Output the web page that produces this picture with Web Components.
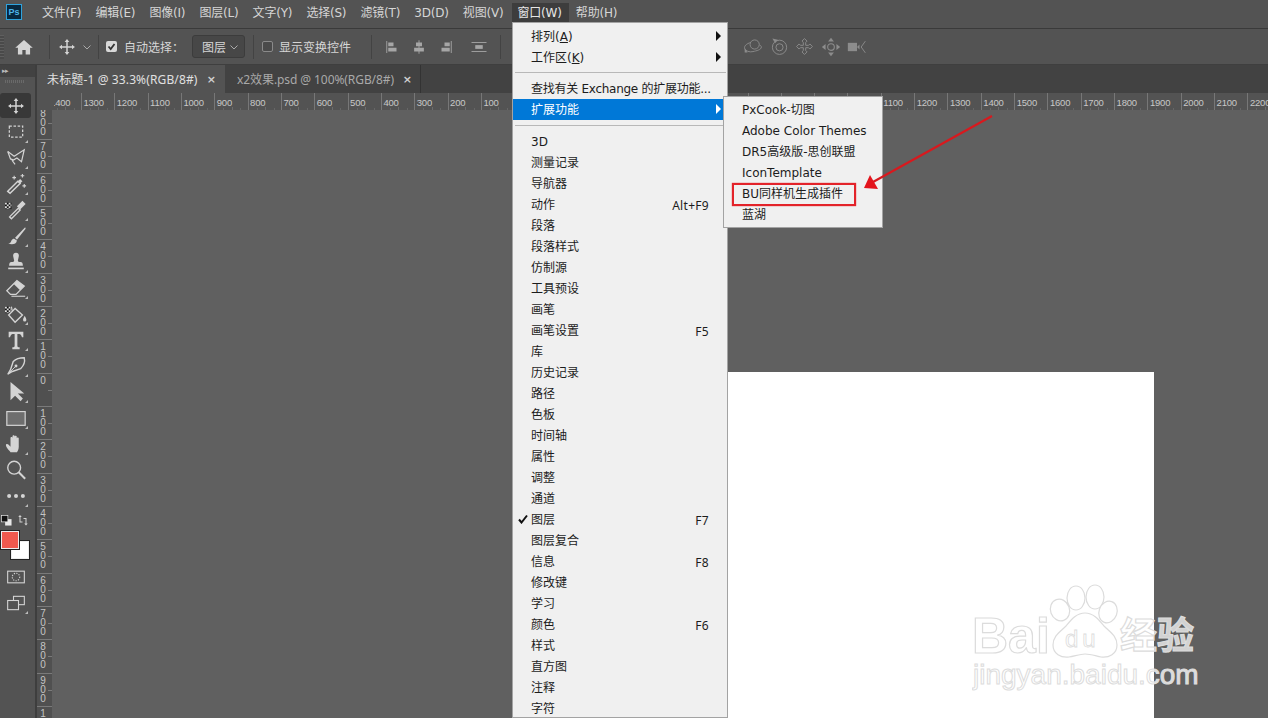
<!DOCTYPE html>
<html><head><meta charset="utf-8">
<style>
html,body{margin:0;padding:0;background:#606060;overflow:hidden}
body{font:12px "DejaVu Sans","Noto Sans CJK SC",sans-serif}
</style></head><body>
<ps-app></ps-app>
<script>
const CHECK='<g transform="translate(0 4)"><rect x="0" y="0" width="7" height="7" fill="#111"/><path d="M0 0h2v2H0zM4 0h2v2H4zM2 2h2v2H2zM6 2h1v2H6zM0 4h2v2H0zM4 4h2v2H4zM2 6h2v1H2z" fill="#ddd"/></g>';
const ICONS={
 home:'<path d="M12 3.500 1.500 13h3.200v8h5.300v-5.500h4V21h5.300v-8h3.200z" fill="currentColor"/>',
 move:'<path d="M12 2.500 9.200 6h1.900v5.100H6V9.200L2.500 12 6 14.800v-1.900h5.100V18H9.200l2.800 3.500 2.800-3.500h-1.900v-5.100H18v1.900l3.500-2.800L18 9.200v1.900h-5.100V6h1.900z" fill="currentColor"/>',
 marquee:'<rect x="4" y="5" width="16" height="13" fill="none" stroke="currentColor" stroke-width="1.500" stroke-dasharray="3 2"/>',
 lasso:'<path d="M3 5 10 10 21 3l-3 13-5-4-5 3 3 4" fill="none" stroke="currentColor" stroke-width="1.300"/><path d="M3 5l3 8 3 1" fill="none" stroke="currentColor" stroke-width="1.300"/>',
 wand:'<path d="M3 20 14 9l2.500 2.500L5.500 22z" fill="none" stroke="currentColor" stroke-width="1.600"/><path d="M14 9l2.500-2.500 2.500 2.500-2.500 2.500z" fill="currentColor"/><path d="M10 3v4M8 5h4M19 1v4M17 3h4M21 12v4M19 14h4" stroke="currentColor" stroke-width="1.200"/>',
 dropper:CHECK+'<path d="M7 21.500 5 19.500 14.500 10l2 2z" fill="none" stroke="currentColor" stroke-width="1.500"/><path d="M13 8l6-6 3.500 3.500-6 6z" fill="currentColor"/>',
 brush:'<path d="M22 2.500 11 14l2 2L22.500 4z" fill="currentColor"/><path d="M10 15c-3 0-3 3-4 4-.6.700-1.500 1-2.500 1 3 2 9 1.500 9.500-3z" fill="currentColor"/>',
 stamp:'<path d="M12 2c-2.500 0-3.500 2-3 4l1 4.500c0 1-1 1.500-3 1.500-1.500 0-2.500 1-2.500 4h15c0-3-1-4-2.500-4-2 0-3-.5-3-1.500l1-4.500c.5-2-.5-4-3-4z" fill="currentColor"/><path d="M3.500 19h17" stroke="currentColor" stroke-width="1.800"/>',
 eraser:'<path d="M2 15 13 4l8 6-9 9H6z" fill="none" stroke="currentColor" stroke-width="1.400"/><path d="M9.500 7.500 13 4l8 6-4.500 4.500z" fill="currentColor"/><path d="M7 21h15" stroke="currentColor" stroke-width="1.200"/>',
 bucket:CHECK+'<path d="M11 6 4 13l7 8 8-8z" fill="none" stroke="currentColor" stroke-width="1.500"/><path d="M8 9 7 4" stroke="currentColor" stroke-width="1.200"/><path d="M21.500 14c1 2 1.800 3 1.800 4.500a1.800 1.800 0 0 1-3.600 0c0-1.500.8-2.500 1.800-4.500z" fill="currentColor"/>',
 type:'<path d="M4 3h16v6h-1.500c-.5-2-1.500-3.500-3-3.500H13.500v13c0 1 .7 1.300 2.500 1.300V22H8v-2.200c1.800 0 2.500-.3 2.500-1.300v-13H8.500c-1.500 0-2.500 1.500-3 3.500H4z" fill="currentColor"/>',
 pen:'<path d="M21 3c-4 0-9 1-12 4L6 16l-3 5 5-3 9-3c3-3 5-8 4-12z" fill="none" stroke="currentColor" stroke-width="1.500"/><circle cx="12" cy="12" r="1.600" fill="currentColor"/><path d="M5 19l6-6" stroke="currentColor"/>',
 arrow:'<path d="M6 1v20l5-5 6 6 2.500-3-5.500-5.500H21z" fill="currentColor"/>',
 rect:'<rect x="2" y="5" width="20" height="15" fill="#6e6e6e" stroke="currentColor" stroke-width="1.300"/>',
 hand:'<path d="M6 21c-1-2-5-5-5-8 0-1.200 1.800-1.500 3-.2L6 15V5.500c0-1.500 2.200-1.500 2.200 0V11V3.500c0-1.500 2.300-1.500 2.300 0V11V4c0-1.500 2.300-1.500 2.300 0v7.500V6c0-1.500 2.200-1.500 2.200 0v9c0 3-1 4.500-2 6z" fill="currentColor"/>',
 zoom:'<circle cx="10" cy="9.500" r="7" fill="none" stroke="currentColor" stroke-width="1.500"/><path d="M15 14.500 22 21.500" stroke="currentColor" stroke-width="2.200"/>',
 dots:'<circle cx="4.500" cy="12" r="2.200" fill="currentColor"/><circle cx="12" cy="12" r="2.200" fill="currentColor"/><circle cx="19.500" cy="12" r="2.200" fill="currentColor"/>',
 mask:'<rect x="2" y="5" width="20" height="14" fill="none" stroke="currentColor" stroke-width="1.300"/><circle cx="12" cy="12" r="4.500" fill="none" stroke="currentColor" stroke-width="1.300" stroke-dasharray="1.500 1.500"/>',
 screen:'<rect x="9" y="4" width="13" height="10" fill="none" stroke="currentColor" stroke-width="1.300"/><rect x="2" y="9" width="13" height="11" fill="#535353" stroke="currentColor" stroke-width="1.300"/>',
 alignL:'<path d="M5 4v16" stroke="currentColor" stroke-width="1.200"/><path d="M7 6h7v5H7zM7 13h11v5H7z" fill="currentColor"/>',
 alignC:'<path d="M12 3v18" stroke="currentColor" stroke-width="1.200"/><path d="M8 6h8v5H8zM5.500 13h13v5h-13z" fill="currentColor"/>',
 alignR:'<path d="M19 4v16" stroke="currentColor" stroke-width="1.200"/><path d="M10 6h7v5h-7zM6 13h11v5H6z" fill="currentColor"/>',
 alignT:'<path d="M2 6h20M2 18h20" stroke="currentColor" stroke-width="1.200"/><path d="M7 9.500h10v5H7z" fill="currentColor"/>',
 orbit:'<circle cx="14" cy="9" r="5.500" fill="none" stroke="currentColor" stroke-width="1.100"/><path d="M9.500 6.500C4 8 1 11 2 14s6 4.500 10 3.500 10-2 10-5.500c0-1-1-2-2-2.500" fill="none" stroke="currentColor" stroke-width="1.100"/><path d="M2 13l3.500 5.500h-3.500z" fill="currentColor"/>',
 roll:'<circle cx="12" cy="13" r="9" fill="none" stroke="currentColor" stroke-width="1.200"/><circle cx="12" cy="13" r="4.500" fill="none" stroke="currentColor" stroke-width="1.200"/><path d="M3 2l7 1.500-3.500 4.500z" fill="currentColor"/>',
 drag:'<path d="M12 2l3.200 3.200-1.700 1.700v3.600h3.600l1.700-1.700L22 12l-3.200 3.200-1.700-1.700h-3.600v3.600l1.700 1.700L12 22l-3.200-3.200 1.700-1.700v-3.600H6.900l-1.700 1.700L2 12l3.200-3.200 1.700 1.700h3.600V6.900L8.800 5.200z" fill="none" stroke="currentColor" stroke-width="1.200"/>',
 slide:'<circle cx="12" cy="12" r="4" fill="none" stroke="currentColor" stroke-width="1.300"/><path d="M12 1l3.500 4.500h-7zM12 23l3.500-4.500h-7zM1 12l4.500-3.500v7zM23 12l-4.500-3.500v7z" fill="currentColor"/>',
 video:'<path d="M1 7h11v10H1z" fill="currentColor"/><path d="M12 12l3-3v6z" fill="currentColor"/><path d="M22 5l-5 7 5 7" fill="none" stroke="currentColor" stroke-width="1.100"/>',
 swap:'<path d="M5 17V6H2.500L6 2l3.500 4H7v9h4v2zM19 8v11h2.500L18 23l-3.500-4H17v-9h-4V8z" fill="currentColor"/>',
 defaults:'<rect x="9" y="9" width="14" height="14" fill="#e8e8e8"/><rect x="1" y="1" width="14" height="14" fill="#111" stroke="#e8e8e8" stroke-width="1.500"/>'
};
const def=(name,html,init)=>{
 customElements.define(name,class extends HTMLElement{
  constructor(){super();this.attachShadow({mode:'open'}).innerHTML=html;}
  connectedCallback(){ if(init) init(this,this.shadowRoot); }
 });
};

def('ps-icon',`<style>:host{display:inline-flex;align-items:center;justify-content:center;color:#d4d4d4;flex:none}svg{display:block;width:100%;height:100%}</style><svg viewBox="0 0 24 24"></svg>`,(h,s)=>{
 s.querySelector('svg').innerHTML=ICONS[h.getAttribute('name')]||'';
 const z=h.getAttribute('size')||20; h.style.width=z+'px'; h.style.height=z+'px';
});

def('ps-menubar',`<style>
:host{display:flex;align-items:center;height:28px;background:#535353;border-bottom:1px solid #3a3a3a;padding-left:6px;color:#d6d6d6;font-size:12px}
.logo{width:14px;height:14px;border:1px solid #2fa3dd;background:#07283f;color:#4db5ea;font:bold 9px "Liberation Sans",sans-serif;display:flex;align-items:center;justify-content:center;margin:-4px 14px 0 0;flex:none}
::slotted(ps-menu-title){margin-top:-3px}
</style><span class="logo">Ps</span><slot></slot>`);

def('ps-menu-title',`<style>
:host{display:block;height:20px;line-height:20px;padding:0 6px;margin-right:2.100px;white-space:nowrap;flex:none;letter-spacing:-.2px}
:host([open]){background:#3d3d3d;color:#e6e6e6;padding-right:7px;margin-right:1.100px}
</style><slot></slot>`);

def('ps-sep',`<style>:host{display:block;width:1px;height:24px;background:#434343;flex:none}</style>`);

def('ps-options',`<style>
:host{display:flex;align-items:center;height:35px;background:#535353;border-bottom:1px solid #3f3f3f;color:#d6d6d6;font-size:12px}
.grip{width:4px;height:24px;margin-right:10px;background:repeating-linear-gradient(#5f5f5f 0 1px,#4a4a4a 1px 3px)}
.chev{width:10px;height:10px;flex:none;color:#aaa}
.chk{width:11px;height:11px;border-radius:2px;background:#d8d8d8;flex:none;display:flex;align-items:center;justify-content:center}
.chk.off{background:#4a4a4a;border:1px solid #8a8a8a;width:9px;height:9px}
.sel{height:23px;border:1px solid #3c3c3c;border-radius:3px;background:#474747;display:flex;align-items:center;justify-content:space-between;padding:0 5px 0 9px;box-sizing:border-box;width:53px;flex:none}
</style>
<span class="grip"></span>
<ps-icon name="home" size="20"></ps-icon><span style="width:15px"></span><ps-sep></ps-sep>
<ps-icon name="move" size="20" style="margin-left:7px"></ps-icon>
<svg class="chev" viewBox="0 0 10 10" style="margin-left:5px"><path d="M1.500 3.500 5 7l3.500-3.500" fill="none" stroke="currentColor"/></svg>
<ps-sep style="margin-left:6px"></ps-sep>
<span class="chk" style="margin-left:7px"><svg width="9" height="9" viewBox="0 0 9 9"><path d="M1.500 4.500 3.700 7 7.500 2" fill="none" stroke="#333" stroke-width="1.800"/></svg></span>
<span style="margin-left:7px;width:68px;flex:none">自动选择：</span>
<span class="sel"><span>图层</span><svg class="chev" viewBox="0 0 10 10"><path d="M1.500 3.500 5 7l3.500-3.500" fill="none" stroke="currentColor"/></svg></span>
<ps-sep style="margin-left:8px"></ps-sep>
<span class="chk off" style="margin-left:8px"></span>
<span style="margin-left:6px;flex:none">显示变换控件</span>
<ps-sep style="margin-left:20px"></ps-sep>
<ps-icon name="alignL" size="18" style="margin-left:11px;color:#a6a6a6"></ps-icon>
<ps-icon name="alignC" size="18" style="margin-left:9px;color:#a6a6a6"></ps-icon>
<ps-icon name="alignR" size="18" style="margin-left:9px;color:#a6a6a6"></ps-icon>
<ps-icon name="alignT" size="18" style="margin-left:15px;color:#a6a6a6"></ps-icon>
<ps-sep style="margin-left:12px"></ps-sep>
<span style="width:242px;flex:none"></span>
<ps-icon name="orbit" size="20" style="color:#8c8c8c"></ps-icon>
<ps-icon name="roll" size="19" style="margin-left:7px;color:#8c8c8c"></ps-icon>
<ps-icon name="drag" size="19" style="margin-left:6px;color:#8c8c8c"></ps-icon>
<ps-icon name="slide" size="20" style="margin-left:7px;color:#8c8c8c"></ps-icon>
<ps-icon name="video" size="20" style="margin-left:6px;color:#8c8c8c"></ps-icon>
`);

def('ps-tool',`<style>
:host{display:flex;align-items:center;justify-content:center;width:31px;height:26px;position:relative;flex:none}
:host([active]){background:#383838;border-radius:3px;height:25px;margin-bottom:1px}
.m{position:absolute;right:3px;bottom:2px;width:0;height:0;border-left:3px solid transparent;border-bottom:3px solid #bbb}
:host([plain]) .m{display:none}
</style><ps-icon></ps-icon><span class="m"></span>`,(h,s)=>{
 const i=s.querySelector('ps-icon');i.setAttribute('name',h.getAttribute('icon'));i.setAttribute('size',h.getAttribute('size')||22);
 i.style.width=i.style.height=(h.getAttribute('size')||22)+'px';
 i.shadowRoot.querySelector('svg').innerHTML=ICONS[h.getAttribute('icon')]||'';
});

def('ps-toolbar',`<style>
:host{display:flex;flex-direction:column;width:35px;background:#535353;border-right:2px solid #3e3e3e;flex:none;height:653px;overflow:hidden}
.top{height:12px;background:#424242;color:#bbb;font-size:7px;line-height:12px;padding-left:2px;letter-spacing:-1px;font-family:"Liberation Sans",sans-serif;flex:none}
.grip{height:3px;margin:3px 10px 10px 5px;background:repeating-linear-gradient(90deg,#6a6a6a 0 1px,#535353 1px 2px);flex:none}
.sw{height:54px;position:relative;margin-top:1px;flex:none}
.col{display:flex;flex-direction:column;flex:none}
.swatch{position:absolute;box-sizing:border-box;border:1px solid #eee;outline:1px solid #222}
.mini{position:absolute;left:1px;top:5px}
</style>
<div class="top">&#9656;&#9656;</div><div class="grip"></div>
<div class="col"><slot></slot></div>
<div class="sw">
 <ps-icon name="defaults" size="11" class="mini"></ps-icon>
 <ps-icon name="swap" size="12" class="mini" style="left:17px;top:4px"></ps-icon>
 <div class="swatch" style="left:11px;top:31px;width:18px;height:18px;background:#fff"></div>
 <div class="swatch" style="left:1px;top:21px;width:18px;height:18px;background:#f15a4f"></div>
</div>
<ps-tool icon="mask" plain size="20"></ps-tool>
<ps-tool icon="screen" size="20"></ps-tool>
`);

def('ps-tabs',`<style>
:host{display:flex;height:28px;background:#424242;flex:none;font:12px "Noto Sans","Noto Sans CJK SC",sans-serif}
</style><slot></slot>`);
def('ps-tab',`<style>
:host{display:flex;align-items:center;height:28px;box-sizing:border-box;width:196px;padding:0 8px 0 12px;color:#a9a9a9;border-right:1px solid #333;white-space:nowrap;flex:none;letter-spacing:-.08px}
:host([active]){background:#535353;color:#e0e0e0;border-right:none;width:188px;padding:0 9px 0 10px;letter-spacing:.13px}
.x{font:bold 11px "DejaVu Sans",sans-serif;margin-left:auto;color:#d0d0d0}
</style><span><slot></slot></span><span class="x">×</span>`);

def('ps-ruler-h',`<style>
:host{display:flex;height:17px;background:#535353;overflow:hidden;flex:none;font:9.500px "Liberation Sans",sans-serif;color:#c8c8c8;border-left:17px solid #535353}
.in{display:flex;margin-left:-6.400px;flex:none}
.c{flex:none;width:33.33px;height:17px;box-sizing:border-box;border-left:1px solid #777;padding-left:1.500px;line-height:19px;letter-spacing:-.2px;background:linear-gradient(#6c6c6c,#6c6c6c) 16.500px 14px/1px 3px no-repeat,linear-gradient(#666,#666) 8px 15px/1px 2px no-repeat,linear-gradient(#666,#666) 25px 15px/1px 2px no-repeat}
</style><div class="in"></div>`,(h,s)=>{
 let o='';for(let v=1400;v>=100;v-=100)o+=`<div class="c">${v}</div>`;
 /* the cells from 0 to 1000 lie under the open menus: ticks only */
 for(let v=0;v<=1000;v+=100)o+=`<div class="c"></div>`;
 for(let v=1100;v<=2200;v+=100)o+=`<div class="c">${v}</div>`;
 s.querySelector('.in').innerHTML=o;
});

def('ps-ruler-v',`<style>
:host{display:block;width:15px;background:#505050;overflow:hidden;flex:none;font:10px "Liberation Sans",sans-serif;color:#c4c4c4}
.in{margin-top:-4px}
.c{height:33.33px;box-sizing:border-box;border-top:1px solid #7a7a7a;padding:2px 0 0 2px;line-height:9px;width:15px;background:linear-gradient(#7a7a7a,#7a7a7a) 11px 16px/4px 1px no-repeat}
.c span{display:block;width:8px;text-align:center}
</style><div class="in"></div>`,(h,s)=>{
 let o='';for(let v=800;v>=0;v-=100)o+=cell(v);for(let v=100;v<=1000;v+=100)o+=cell(v);
 function cell(v){return `<div class="c">${String(v).split('').map(d=>`<span>${d}</span>`).join('')}</div>`}
 s.querySelector('.in').innerHTML=o;
});

def('ps-canvas',`<style>
:host{display:block;flex:1;background:#606060;overflow:hidden;padding:262px 0 0 676px;box-sizing:border-box}
.doc{width:426px;height:400px;background:#fff}
</style><div class="doc"></div>`);

def('ps-menu',`<style>
:host{display:block;position:absolute;background:#f0f0f0;border:1px solid #a3a3a3;box-sizing:border-box;color:#1c1c1c;font-size:12px;overflow:hidden}
</style><slot></slot>`);
def('ps-menu-item',`<style>
:host{display:flex;height:21px;line-height:19px;padding:2px 18px 0;box-sizing:border-box;position:relative;white-space:nowrap}
:host([active]){background:#0078d7;color:#fff}
.k{margin-left:auto;font-family:"Noto Sans",sans-serif;letter-spacing:.3px}
.a{position:absolute;right:6px;top:5px;width:0;height:0;border-left:5px solid #111;border-top:5px solid transparent;border-bottom:5px solid transparent;display:none}
:host([sub]) .a{display:block}
:host([active]) .a{border-left-color:#fff}
.c{position:absolute;left:5px;top:5px;display:none}
:host([checked]) .c{display:block}
</style><svg class="c" width="10" height="10" viewBox="0 0 10 10"><path d="M1 5.500 3.500 8.500 9 1.500" fill="none" stroke="#111" stroke-width="2"/></svg><span><slot></slot></span><span class="k"></span><span class="a"></span>`,(h,s)=>{
 s.querySelector('.k').textContent=h.getAttribute('key')||'';
});
def('ps-menu-sep',`<style>
:host{display:flex;align-items:center;height:10px;padding:0 0 1px 0;box-sizing:border-box}
i{display:block;height:1px;background:#b8b8b8;flex:1;margin:0 1px 0 2px}
</style><i></i>`);

def('ps-highlight',`<style>:host{display:block;position:absolute;box-sizing:border-box;border:2px solid #e3232a;box-shadow:0 0 1px #e3232a}</style>`);
def('ps-arrow',`<style>:host{display:block;position:absolute}svg{display:block}</style>
<svg width="140" height="84" viewBox="0 0 140 84"><path d="M133 3 14 69" stroke="#d8191e" stroke-width="2.200" fill="none"/><path d="M5 75 11 62 19 76z" fill="#e3141c"/></svg>`);

def('ps-watermark',`<style>:host{display:block;position:absolute;pointer-events:none}svg{display:block}</style>
<svg width="240" height="120" viewBox="0 0 240 120">
<g fill="rgba(255,255,255,.72)" stroke="#dcdcdc" stroke-width="1.200">
<g transform="translate(-2 0)">
<ellipse cx="90" cy="30" rx="9.500" ry="11" transform="rotate(-20 90 30)"/>
<ellipse cx="106" cy="18" rx="9" ry="12"/>
<ellipse cx="125" cy="17" rx="9" ry="12"/>
<ellipse cx="138" cy="32" rx="9" ry="11" transform="rotate(20 138 32)"/>
<path d="M115 33c-9 0-14 7-19 13-6 6-13 10-13 19 0 9 8 13 16 12 6-1 11-3 16-3s11 2 16 3c8 1 16-3 16-12 0-9-7-13-13-19-5-6-10-13-19-13z"/>
</g>
<text x="0" y="73" font-family="Liberation Sans, sans-serif" font-size="50" font-weight="700">Bai</text>
<text x="93" y="67" font-family="Liberation Sans, sans-serif" font-size="24" letter-spacing="4" stroke-width=".8">du</text>
<text x="148" y="69" font-family="Noto Sans CJK SC, sans-serif" font-size="37" font-weight="700">经验</text>
<text x="1" y="104" font-family="Liberation Sans, sans-serif" font-size="28" stroke-width="1" fill="rgba(255,255,255,.8)">jingyan.baidu.com</text>
</g></svg>`);

def('ps-app',`<style>
:host{display:flex;flex-direction:column;width:1268px;height:718px;position:relative;overflow:hidden;background:#606060}
.main{display:flex;flex:1;min-height:0}
.right{display:flex;flex-direction:column;flex:1;min-width:0}
.work{display:flex;flex:1;min-height:0}
u{text-underline-offset:1px}
</style>
<ps-menubar>
<ps-menu-title>文件(F)</ps-menu-title><ps-menu-title>编辑(E)</ps-menu-title><ps-menu-title>图像(I)</ps-menu-title><ps-menu-title>图层(L)</ps-menu-title><ps-menu-title>文字(Y)</ps-menu-title><ps-menu-title>选择(S)</ps-menu-title><ps-menu-title>滤镜(T)</ps-menu-title><ps-menu-title>3D(D)</ps-menu-title><ps-menu-title>视图(V)</ps-menu-title><ps-menu-title open>窗口(W)</ps-menu-title><ps-menu-title>帮助(H)</ps-menu-title>
</ps-menubar>
<ps-options></ps-options>
<div class="main">
 <ps-toolbar id="tb"></ps-toolbar>
 <div class="right">
  <ps-tabs><ps-tab active>未标题-1 @ 33.3%(RGB/8#)</ps-tab><ps-tab>x2效果.psd @ 100%(RGB/8#)</ps-tab></ps-tabs>
  <ps-ruler-h></ps-ruler-h>
  <div class="work"><ps-ruler-v></ps-ruler-v><ps-canvas></ps-canvas></div>
 </div>
</div>
<ps-menu style="left:512px;top:22px;width:216px;height:696px;padding-top:3px">
 <ps-menu-item sub>排列(<u>A</u>)</ps-menu-item>
 <ps-menu-item sub>工作区(<u>K</u>)</ps-menu-item>
 <ps-menu-sep></ps-menu-sep>
 <ps-menu-item style="letter-spacing:-.27px">查找有关 Exchange 的扩展功能...</ps-menu-item>
 <ps-menu-item sub active>扩展功能</ps-menu-item>
 <ps-menu-sep style="height:11px"></ps-menu-sep>
 <ps-menu-item>3D</ps-menu-item><ps-menu-item>测量记录</ps-menu-item><ps-menu-item>导航器</ps-menu-item>
 <ps-menu-item key="Alt+F9">动作</ps-menu-item><ps-menu-item>段落</ps-menu-item><ps-menu-item>段落样式</ps-menu-item>
 <ps-menu-item>仿制源</ps-menu-item><ps-menu-item>工具预设</ps-menu-item><ps-menu-item>画笔</ps-menu-item>
 <ps-menu-item key="F5">画笔设置</ps-menu-item><ps-menu-item>库</ps-menu-item><ps-menu-item>历史记录</ps-menu-item>
 <ps-menu-item>路径</ps-menu-item><ps-menu-item>色板</ps-menu-item><ps-menu-item>时间轴</ps-menu-item>
 <ps-menu-item>属性</ps-menu-item><ps-menu-item>调整</ps-menu-item><ps-menu-item>通道</ps-menu-item>
 <ps-menu-item key="F7" checked>图层</ps-menu-item><ps-menu-item>图层复合</ps-menu-item><ps-menu-item key="F8">信息</ps-menu-item>
 <ps-menu-item>修改键</ps-menu-item><ps-menu-item>学习</ps-menu-item><ps-menu-item key="F6">颜色</ps-menu-item>
 <ps-menu-item>样式</ps-menu-item><ps-menu-item>直方图</ps-menu-item><ps-menu-item>注释</ps-menu-item><ps-menu-item>字符</ps-menu-item>
</ps-menu>
<ps-menu style="left:723px;top:96px;width:160px;height:132px;padding-top:2px">
 <ps-menu-item>PxCook-切图</ps-menu-item><ps-menu-item>Adobe Color Themes</ps-menu-item><ps-menu-item>DR5高级版-思创联盟</ps-menu-item>
 <ps-menu-item>IconTemplate</ps-menu-item><ps-menu-item>BU同样机生成插件</ps-menu-item><ps-menu-item>蓝湖</ps-menu-item>
</ps-menu>
<ps-highlight style="left:732px;top:183px;width:124px;height:23px"></ps-highlight>
<ps-arrow style="left:859px;top:113px"></ps-arrow>
<ps-watermark style="left:972px;top:580px"></ps-watermark>
`,(h,s)=>{
 const tools=['move','marquee','lasso','wand','dropper','brush','stamp','eraser','bucket','type','pen','arrow','rect','hand','zoom','dots'];
 const small={move:20,marquee:20};
 const tb=s.getElementById('tb');
 tools.forEach((t,i)=>{const e=document.createElement('ps-tool');e.setAttribute('icon',t);
  e.setAttribute('size',small[t]||22);
  if(i==0){e.setAttribute('active','');e.setAttribute('plain','')}
  if(t=='zoom')e.setAttribute('plain','');
  tb.appendChild(e);});
});
</script>
</body></html>
